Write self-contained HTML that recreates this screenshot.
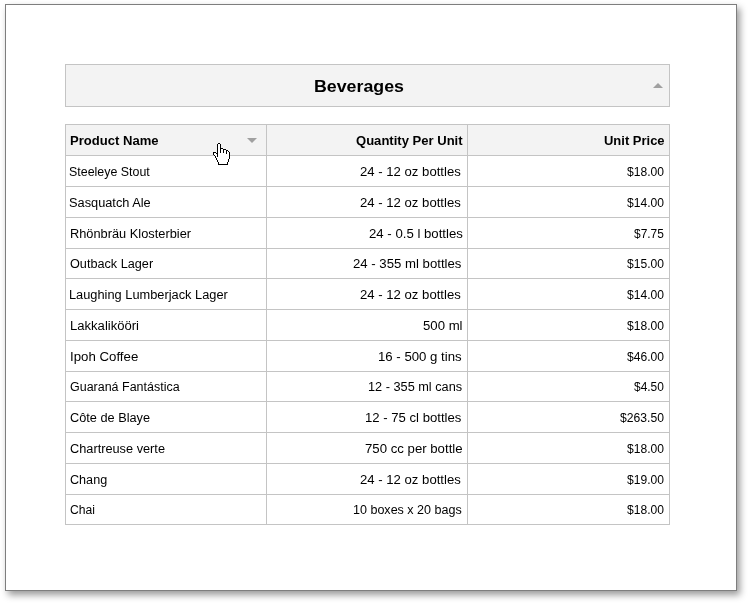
<!DOCTYPE html>
<html><head><meta charset="utf-8">
<style>
html,body{margin:0;padding:0;background:#fff;width:748px;height:603px;overflow:hidden;position:relative}
*{box-sizing:border-box}
body{font-family:"Liberation Sans",sans-serif;color:#000}
.page{position:absolute;left:5px;top:4px;width:732px;height:587px;background:#fff;border:1px solid #7e7e7e;box-shadow:3px 4px 7px rgba(0,0,0,0.4)}
.grp{position:absolute;left:65px;top:64px;width:605px;height:43px;background:#f3f3f3;border:1px solid #c4c4c4}
.grid{position:absolute;left:65px;top:124px;width:605px;height:401px;background:#fff;border:1px solid #c4c4c4}
.hdr{position:absolute;left:66px;top:125px;width:603px;height:30px;background:#f3f3f3}
.hl{position:absolute;left:65px;width:605px;height:1px;background:#c4c4c4}
.vl{position:absolute;top:124px;width:1px;height:401px;background:#c4c4c4}
.t{position:absolute;line-height:20px;white-space:nowrap;color:#000;transform-origin:0 0}
.b{font-weight:bold}
.tri{position:absolute;width:0;height:0}
</style></head><body>
<div class="page"></div>
<div class="grp"></div>
<div class="tri" style="left:653px;top:83px;border-left:5px solid transparent;border-right:5px solid transparent;border-bottom:5px solid #a0a0a0"></div>
<div class="grid"></div>
<div class="hdr"></div>
<div class="hl" style="top:155px"></div>
<div class="hl" style="top:186px"></div><div class="hl" style="top:217px"></div><div class="hl" style="top:248px"></div><div class="hl" style="top:278px"></div><div class="hl" style="top:309px"></div><div class="hl" style="top:340px"></div><div class="hl" style="top:371px"></div><div class="hl" style="top:401px"></div><div class="hl" style="top:432px"></div><div class="hl" style="top:463px"></div><div class="hl" style="top:494px"></div>
<div class="vl" style="left:266px"></div>
<div class="vl" style="left:467px"></div>
<div class="tri" style="left:247px;top:138px;border-left:5px solid transparent;border-right:5px solid transparent;border-top:5px solid #a0a0a0"></div>
<div class="t " style="left:69.22px;top:161.67px;font-size:12.5px;transform:scaleX(0.9935)">Steeleye Stout</div><div class="t " style="left:360.14px;top:161.67px;font-size:12.5px;transform:scaleX(1.0510)">24 - 12 oz bottles</div><div class="t " style="left:626.50px;top:161.67px;font-size:12.5px;transform:scaleX(0.9665)">$18.00</div><div class="t " style="left:69.40px;top:192.67px;font-size:12.5px;transform:scaleX(1.0226)">Sasquatch Ale</div><div class="t " style="left:360.14px;top:192.67px;font-size:12.5px;transform:scaleX(1.0510)">24 - 12 oz bottles</div><div class="t " style="left:626.50px;top:192.67px;font-size:12.5px;transform:scaleX(0.9665)">$14.00</div><div class="t " style="left:69.90px;top:223.67px;font-size:12.5px;transform:scaleX(1.0245)">Rhönbräu Klosterbier</div><div class="t " style="left:368.56px;top:223.67px;font-size:12.5px;transform:scaleX(1.0556)">24 - 0.5 l bottles</div><div class="t " style="left:633.58px;top:223.67px;font-size:12.5px;transform:scaleX(0.9550)">$7.75</div><div class="t " style="left:69.72px;top:253.67px;font-size:12.5px;transform:scaleX(1.0135)">Outback Lager</div><div class="t " style="left:353.38px;top:253.67px;font-size:12.5px;transform:scaleX(1.0540)">24 - 355 ml bottles</div><div class="t " style="left:626.58px;top:253.67px;font-size:12.5px;transform:scaleX(0.9665)">$15.00</div><div class="t " style="left:69.40px;top:284.67px;font-size:12.5px;transform:scaleX(1.0245)">Laughing Lumberjack Lager</div><div class="t " style="left:360.14px;top:284.67px;font-size:12.5px;transform:scaleX(1.0510)">24 - 12 oz bottles</div><div class="t " style="left:626.58px;top:284.67px;font-size:12.5px;transform:scaleX(0.9665)">$14.00</div><div class="t " style="left:69.87px;top:315.67px;font-size:12.5px;transform:scaleX(1.0457)">Lakkalikööri</div><div class="t " style="left:422.56px;top:315.67px;font-size:12.5px;transform:scaleX(1.0533)">500 ml</div><div class="t " style="left:626.58px;top:315.67px;font-size:12.5px;transform:scaleX(0.9665)">$18.00</div><div class="t " style="left:69.86px;top:346.67px;font-size:12.5px;transform:scaleX(1.0600)">Ipoh Coffee</div><div class="t " style="left:378.22px;top:346.67px;font-size:12.5px;transform:scaleX(1.0556)">16 - 500 g tins</div><div class="t " style="left:626.58px;top:346.67px;font-size:12.5px;transform:scaleX(0.9665)">$46.00</div><div class="t " style="left:69.72px;top:376.67px;font-size:12.5px;transform:scaleX(0.9981)">Guaraná Fantástica</div><div class="t " style="left:367.64px;top:376.67px;font-size:12.5px;transform:scaleX(1.0185)">12 - 355 ml cans</div><div class="t " style="left:633.66px;top:376.67px;font-size:12.5px;transform:scaleX(0.9550)">$4.50</div><div class="t " style="left:69.72px;top:407.67px;font-size:12.5px;transform:scaleX(1.0187)">Côte de Blaye</div><div class="t " style="left:365.38px;top:407.67px;font-size:12.5px;transform:scaleX(1.0509)">12 - 75 cl bottles</div><div class="t " style="left:619.58px;top:407.67px;font-size:12.5px;transform:scaleX(0.9728)">$263.50</div><div class="t " style="left:69.72px;top:438.67px;font-size:12.5px;transform:scaleX(1.0203)">Chartreuse verte</div><div class="t " style="left:364.56px;top:438.67px;font-size:12.5px;transform:scaleX(1.0557)">750 cc per bottle</div><div class="t " style="left:626.58px;top:438.67px;font-size:12.5px;transform:scaleX(0.9665)">$18.00</div><div class="t " style="left:69.72px;top:469.67px;font-size:12.5px;transform:scaleX(1.0091)">Chang</div><div class="t " style="left:360.14px;top:469.67px;font-size:12.5px;transform:scaleX(1.0510)">24 - 12 oz bottles</div><div class="t " style="left:626.58px;top:469.67px;font-size:12.5px;transform:scaleX(0.9665)">$19.00</div><div class="t " style="left:70.10px;top:499.67px;font-size:12.5px;transform:scaleX(0.9707)">Chai</div><div class="t " style="left:353.06px;top:499.67px;font-size:12.5px;transform:scaleX(1.0026)">10 boxes x 20 bags</div><div class="t " style="left:626.58px;top:499.67px;font-size:12.5px;transform:scaleX(0.9665)">$18.00</div><div class="t b" style="left:69.64px;top:130.50px;font-size:13px;transform:scaleX(1.0052)">Product Name</div><div class="t b" style="left:355.66px;top:130.50px;font-size:13px;transform:scaleX(1.0039)">Quantity Per Unit</div><div class="t b" style="left:603.64px;top:130.50px;font-size:13px;transform:scaleX(0.9985)">Unit Price</div><div class="t b" style="left:314.36px;top:77.18px;font-size:16.8px;transform:scaleX(1.0591)">Beverages</div>
<svg width="20" height="24" style="position:absolute;left:212px;top:142px;filter:drop-shadow(0 0 0.7px #fff)" shape-rendering="crispEdges"><rect x="6" y="2" width="2" height="1" fill="#fff"/><rect x="6" y="3" width="2" height="1" fill="#fff"/><rect x="6" y="4" width="2" height="1" fill="#fff"/><rect x="6" y="5" width="2" height="1" fill="#fff"/><rect x="6" y="6" width="2" height="1" fill="#fff"/><rect x="6" y="7" width="2" height="1" fill="#fff"/><rect x="9" y="7" width="2" height="1" fill="#fff"/><rect x="6" y="8" width="2" height="1" fill="#fff"/><rect x="9" y="8" width="2" height="1" fill="#fff"/><rect x="12" y="8" width="2" height="1" fill="#fff"/><rect x="6" y="9" width="2" height="1" fill="#fff"/><rect x="9" y="9" width="2" height="1" fill="#fff"/><rect x="12" y="9" width="2" height="1" fill="#fff"/><rect x="15" y="9" width="1" height="1" fill="#fff"/><rect x="6" y="10" width="2" height="1" fill="#fff"/><rect x="9" y="10" width="2" height="1" fill="#fff"/><rect x="12" y="10" width="2" height="1" fill="#fff"/><rect x="15" y="10" width="2" height="1" fill="#fff"/><rect x="2" y="11" width="2" height="1" fill="#fff"/><rect x="6" y="11" width="8" height="1" fill="#fff"/><rect x="15" y="11" width="2" height="1" fill="#fff"/><rect x="2" y="12" width="3" height="1" fill="#fff"/><rect x="6" y="12" width="11" height="1" fill="#fff"/><rect x="3" y="13" width="2" height="1" fill="#fff"/><rect x="6" y="13" width="11" height="1" fill="#fff"/><rect x="4" y="14" width="1" height="1" fill="#fff"/><rect x="6" y="14" width="11" height="1" fill="#fff"/><rect x="4" y="15" width="13" height="1" fill="#fff"/><rect x="5" y="16" width="12" height="1" fill="#fff"/><rect x="5" y="17" width="11" height="1" fill="#fff"/><rect x="6" y="18" width="10" height="1" fill="#fff"/><rect x="6" y="19" width="10" height="1" fill="#fff"/><rect x="7" y="20" width="8" height="1" fill="#fff"/><rect x="7" y="21" width="8" height="1" fill="#fff"/><rect x="6" y="1" width="2" height="1" fill="#000"/><rect x="5" y="2" width="1" height="1" fill="#000"/><rect x="8" y="2" width="1" height="1" fill="#000"/><rect x="5" y="3" width="1" height="1" fill="#000"/><rect x="8" y="3" width="1" height="1" fill="#000"/><rect x="5" y="4" width="1" height="1" fill="#000"/><rect x="8" y="4" width="1" height="1" fill="#000"/><rect x="5" y="5" width="1" height="1" fill="#000"/><rect x="8" y="5" width="1" height="1" fill="#000"/><rect x="5" y="6" width="1" height="1" fill="#000"/><rect x="8" y="6" width="3" height="1" fill="#000"/><rect x="5" y="7" width="1" height="1" fill="#000"/><rect x="8" y="7" width="1" height="1" fill="#000"/><rect x="11" y="7" width="3" height="1" fill="#000"/><rect x="5" y="8" width="1" height="1" fill="#000"/><rect x="8" y="8" width="1" height="1" fill="#000"/><rect x="11" y="8" width="1" height="1" fill="#000"/><rect x="14" y="8" width="2" height="1" fill="#000"/><rect x="5" y="9" width="1" height="1" fill="#000"/><rect x="8" y="9" width="1" height="1" fill="#000"/><rect x="11" y="9" width="1" height="1" fill="#000"/><rect x="14" y="9" width="1" height="1" fill="#000"/><rect x="16" y="9" width="1" height="1" fill="#000"/><rect x="1" y="10" width="3" height="1" fill="#000"/><rect x="5" y="10" width="1" height="1" fill="#000"/><rect x="8" y="10" width="1" height="1" fill="#000"/><rect x="11" y="10" width="1" height="1" fill="#000"/><rect x="14" y="10" width="1" height="1" fill="#000"/><rect x="17" y="10" width="1" height="1" fill="#000"/><rect x="1" y="11" width="1" height="1" fill="#000"/><rect x="4" y="11" width="2" height="1" fill="#000"/><rect x="14" y="11" width="1" height="1" fill="#000"/><rect x="17" y="11" width="1" height="1" fill="#000"/><rect x="1" y="12" width="1" height="1" fill="#000"/><rect x="5" y="12" width="1" height="1" fill="#000"/><rect x="17" y="12" width="1" height="1" fill="#000"/><rect x="2" y="13" width="1" height="1" fill="#000"/><rect x="5" y="13" width="1" height="1" fill="#000"/><rect x="17" y="13" width="1" height="1" fill="#000"/><rect x="3" y="14" width="1" height="1" fill="#000"/><rect x="5" y="14" width="1" height="1" fill="#000"/><rect x="17" y="14" width="1" height="1" fill="#000"/><rect x="3" y="15" width="1" height="1" fill="#000"/><rect x="17" y="15" width="1" height="1" fill="#000"/><rect x="4" y="16" width="1" height="1" fill="#000"/><rect x="17" y="16" width="1" height="1" fill="#000"/><rect x="4" y="17" width="1" height="1" fill="#000"/><rect x="16" y="17" width="1" height="1" fill="#000"/><rect x="5" y="18" width="1" height="1" fill="#000"/><rect x="16" y="18" width="1" height="1" fill="#000"/><rect x="5" y="19" width="1" height="1" fill="#000"/><rect x="16" y="19" width="1" height="1" fill="#000"/><rect x="6" y="20" width="1" height="1" fill="#000"/><rect x="15" y="20" width="1" height="1" fill="#000"/><rect x="6" y="21" width="1" height="1" fill="#000"/><rect x="15" y="21" width="1" height="1" fill="#000"/><rect x="6" y="22" width="10" height="1" fill="#000"/></svg>
</body></html>
